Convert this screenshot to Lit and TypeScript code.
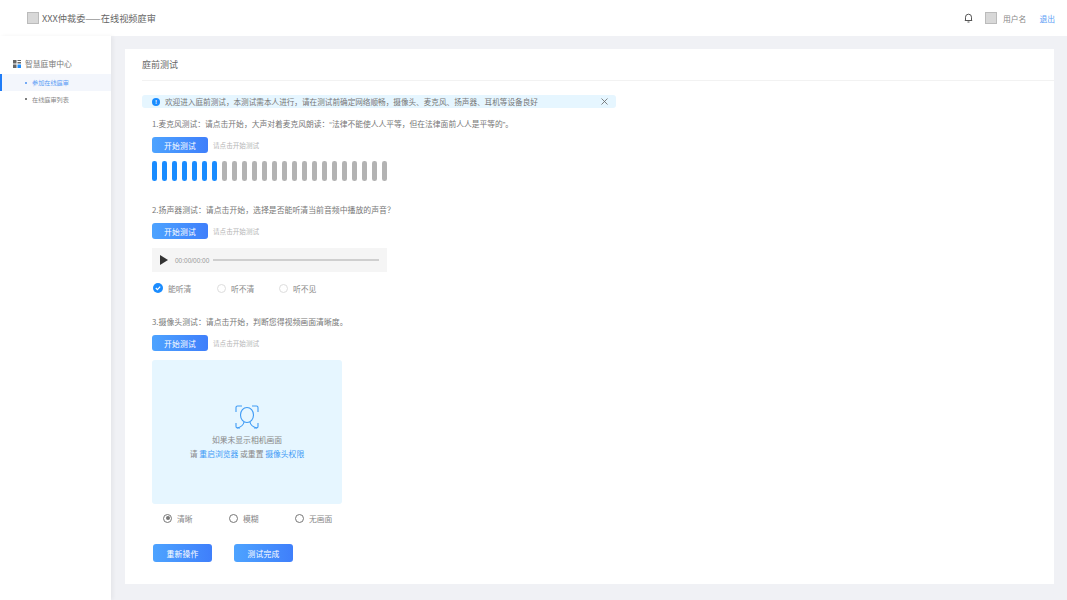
import { LitElement, html, css } from "lit";
import { customElement } from "lit/decorators.js";

@customElement("app-root")
export class AppRoot extends LitElement {
  static styles = css`
    :host { display: block; width: 1067px; height: 600px; overflow: hidden; background: #f0f1f5; color: #777; font-family: "Noto Sans CJK SC", "Noto Sans", sans-serif; }
    * { box-sizing: border-box; }
    .top { height: 36px; background: #fff; display: flex; align-items: center; padding: 0 12px 0 27px; }
    .ph { background: #d8d8d8; border: 1px solid #bbb; flex: none; width: 12px; height: 12px; }
    .brand { font-size: 9.2px; margin-left: 3px; color: #666; }
    .sp { flex: 1; }
    .bell { margin-right: 12px; display: block; }
    .user { font-size: 7.8px; margin-left: 6px; color: #888; }
    .quit { font-size: 7.8px; margin-left: 13px; color: #5a9cf5; }
    .main { display: flex; height: 564px; }
    .side { width: 111px; background: #fff; box-shadow: 2px 0 4px rgba(0,0,0,.05); padding-top: 21px; flex: none; }
    .shead { display: flex; align-items: center; height: 13px; padding-left: 13px; font-size: 7.8px; color: #777; gap: 4px; }
    .mi { height: 17px; display: flex; align-items: center; padding-left: 25px; font-size: 6.15px; color: #888; gap: 5px; }
    .mi i { width: 2px; height: 2px; border-radius: 50%; background: #555; flex: none; }
    .mi.on { margin-top: 4px; background: #f3f6fc; color: #5a9cf5; border-left: 2px solid #1f7cf7; padding-left: 23px; }
    .mi.on i { background: #4a90f5; }
    .mi + .mi { height: 16px; }
    .card { margin: 13px 13px 16px 14px; flex: 1; background: #fff; display: flex; flex-direction: column; }
    .ctitle { height: 32px; border-bottom: 1px solid #f2f2f2; margin-left: 17px; display: flex; align-items: center; font-size: 9px; color: #666; }
    .body { padding: 14px 0 0 17px; display: flex; flex-direction: column; align-items: flex-start; }
    .alert { width: 474px; height: 13px; background: #e6f6ff; border-radius: 3px; display: flex; align-items: center; padding: 0 8px 0 10px; font-size: 7.62px; color: #777; gap: 5px; }
    .info { width: 8px; height: 8px; border-radius: 50%; background: #1a8cff; color: #fff; font: bold 6px/8px "Liberation Sans", sans-serif; text-align: center; flex: none; }
    .alert .x { margin-left: auto; display: block; }
    .sec { padding-left: 10px; display: flex; flex-direction: column; align-items: flex-start; }
    .q { font-size: 7.88px; line-height: 12px; color: #777; }
    .q.a { margin-top: 10px; font-size: 7.78px; }
    .q.b { margin-top: 23px; }
    .q.c { margin-top: 20px; }
    .lq { font-family: "Liberation Sans", sans-serif; }
    .row { display: flex; align-items: center; gap: 5px; margin-top: 7px; }
    .row.first { margin-top: 6px; }
    .btn { width: 56px; height: 16px; border-radius: 3px; background: linear-gradient(90deg, #4da3ff, #3f7ffb); color: #fff; font-size: 7.8px; display: flex; align-items: center; justify-content: center; letter-spacing: .2px; }
    .hint { font-size: 6.6px; color: #b5b5b5; }
    .bars { display: flex; gap: 5.500px; margin-top: 8px; }
    .bars i { width: 4.500px; height: 20px; border-radius: 2.250px; background: #b3b3b3; }
    .bars i.on { background: #1a8cff; }
    .player { width: 235px; height: 24px; margin-top: 9px; background: #f5f5f5; display: flex; align-items: center; padding: 0 8px; }
    .time { font: 6.5px "Liberation Sans", sans-serif; color: #999; margin-left: 6px; }
    .track { flex: 1; height: 2px; background: #cfcfcf; margin-left: 4px; }
    .opts { display: flex; margin-top: 8px; font-size: 7.8px; color: #888; height: 16px; align-items: center; }
    .opt { display: flex; align-items: center; gap: 5px; }
    .opt.w1 { width: 65px; }
    .opt.w2 { width: 62px; }
    .opt.w3 { width: 66px; }
    .dot { width: 9px; height: 9px; border-radius: 50%; border: 1px solid #ddd; flex: none; }
    .check { width: 10px; height: 10px; flex: none; display: block; margin-left: 1px; }
    .cam { width: 190px; height: 144px; margin-top: 9px; background: #e6f6ff; border-radius: 3px; display: flex; flex-direction: column; align-items: center; padding-top: 45px; font-size: 7.8px; color: #888; }
    .cam svg { display: block; margin-bottom: 4px; }
    .cam p { margin: 0; line-height: 14px; }
    .cam a { color: #3f9bf5; }
    .radio { width: 9px; height: 9px; border-radius: 50%; border: 1px solid #777; flex: none; display: flex; align-items: center; justify-content: center; }
    .radio.on i { width: 4px; height: 4px; border-radius: 50%; background: #777; }
    .opts2 { margin-left: 11px; margin-top: 6px; }
    .acts { display: flex; gap: 22px; margin: 18px 0 0 1px; }
    .acts .btn { width: 59px; height: 18px; }
  `;

  render() {
    const bars = Array.from({ length: 24 }, (_, i) => i < 7);
    return html`
      <div class="top">
        <div class="ph"></div>
        <div class="brand">XXX仲裁委——在线视频庭审</div>
        <div class="sp"></div>
        <svg class="bell" width="9" height="10" viewBox="0 0 9 10" fill="none" stroke="#555" stroke-width="1"><path d="M1.500 7.500V4.200a3 3 0 0 1 6 0v3.300zM.8 7.500h7.400M3.500 9h2"/></svg>
        <div class="ph"></div>
        <div class="user">用户名</div>
        <div class="quit">退出</div>
      </div>
      <div class="main">
        <div class="side">
          <div class="shead">
            <svg width="8" height="8" viewBox="0 0 8 8"><path fill="#666" d="M0 0h3.500v3.500H0zM4.500 0H8v1H4.500zM4.500 2H8v1.500H4.500zM0 4.500h3.500V8H0z"/><path fill="#1a8cff" d="M4.500 4.500H8V8H4.500z"/></svg>
            智慧庭审中心
          </div>
          <div class="mi on"><i></i>参加在线庭审</div>
          <div class="mi"><i></i>在线庭审列表</div>
        </div>
        <div class="card">
          <div class="ctitle">庭前测试</div>
          <div class="body">
            <div class="alert">
              <div class="info">!</div>
              欢迎进入庭前测试，本测试需本人进行，请在测试前确定网络顺畅，摄像头、麦克风、扬声器、耳机等设备良好
              <svg class="x" width="7" height="7" viewBox="0 0 7 7" stroke="#666" stroke-width=".8"><path d="M.5.5l6 6M6.500.5l-6 6"/></svg>
            </div>
            <div class="sec">
              <div class="q a">1.麦克风测试：请点击开始，大声对着麦克风朗读：<span class="lq">“</span>法律不能使人人平等，但在法律面前人人是平等的<span class="lq">”</span>。</div>
              <div class="row first"><div class="btn">开始测试</div><div class="hint">请点击开始测试</div></div>
              <div class="bars">${bars.map((on) => html`<i class=${on ? "on" : ""}></i>`)}</div>
              <div class="q b">2.扬声器测试：请点击开始，选择是否能听清当前音频中播放的声音？</div>
              <div class="row"><div class="btn">开始测试</div><div class="hint">请点击开始测试</div></div>
              <div class="player">
                <svg width="9" height="10" viewBox="0 0 9 10"><path fill="#333" d="M0 0l8 5-8 5z"/></svg>
                <div class="time">00:00/00:00</div>
                <div class="track"></div>
              </div>
              <div class="opts">
                <div class="opt w1"><svg class="check" viewBox="0 0 10 10"><circle cx="5" cy="5" r="5" fill="#1a8cff"/><path d="M2.800 5l1.600 1.600 2.800-3" fill="none" stroke="#fff" stroke-width="1.200"/></svg>能听清</div>
                <div class="opt w2"><div class="dot"></div>听不清</div>
                <div class="opt"><div class="dot"></div>听不见</div>
              </div>
              <div class="q c">3.摄像头测试：请点击开始，判断您得视频画面清晰度。</div>
              <div class="row"><div class="btn">开始测试</div><div class="hint">请点击开始测试</div></div>
              <div class="cam">
                <svg width="24" height="24" viewBox="0 0 24 24" fill="none" stroke="#3f9bf5" stroke-width="1.100"><path d="M1 7V2.500A1.500 1.500 0 0 1 2.500 1H7M17 1h4.500A1.500 1.500 0 0 1 23 2.500V7M1 18v3.500A1.500 1.500 0 0 0 2.500 23H5M19 23h2.500a1.500 1.500 0 0 0 1.500-1.500V18"/><ellipse cx="12" cy="10" rx="6.500" ry="7.500"/><path d="M9 17c-.5 3-3 5-7 6M15 17c.5 3 3 5 7 6"/></svg>
                <p>如果未显示相机画面</p>
                <p>请 <a>重启浏览器</a> 或重置 <a>摄像头权限</a></p>
              </div>
              <div class="opts opts2">
                <div class="opt w3"><div class="radio on"><i></i></div>清晰</div>
                <div class="opt w3"><div class="radio"></div>模糊</div>
                <div class="opt"><div class="radio"></div>无画面</div>
              </div>
              <div class="acts"><div class="btn">重新操作</div><div class="btn">测试完成</div></div>
            </div>
          </div>
        </div>
      </div>
    `;
  }
}
